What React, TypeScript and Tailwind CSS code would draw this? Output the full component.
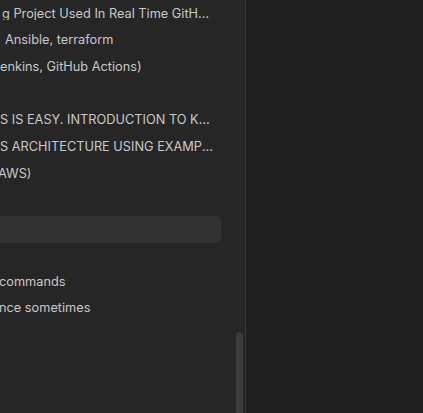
const items: { text: string; pad: string; active?: boolean }[] = [
  { text: 'g Project Used In Real Time GitHub Actions Workflow', pad: 'pl-[2px]' },
  { text: 'Ansible, terraform', pad: 'pl-[5px]' },
  { text: 'enkins, GitHub Actions)', pad: 'pl-0' },
  { text: '', pad: 'pl-0' },
  { text: 'S IS EASY. INTRODUCTION TO KUBERNETES', pad: 'pl-0' },
  { text: 'S ARCHITECTURE USING EXAMPLES', pad: 'pl-0' },
  { text: 'AWS)', pad: '-ml-[2px]' },
  { text: '', pad: 'pl-0' },
  { text: '', pad: 'pl-0', active: true },
  { text: '', pad: 'pl-0' },
  { text: 'commands', pad: '-ml-[1px]' },
  { text: 'nce sometimes', pad: '-ml-[1px]' },
];

export default function App() {
  return (
    <div
      className="flex h-[413px] w-[423px] overflow-hidden bg-[#1f1f1f]"
      style={{ fontFamily: 'Inter, "Noto Sans", sans-serif' }}
    >
      <aside className="relative h-full w-[246px] shrink-0 border-r border-[#363636] bg-[#262626]">
        <ul className="flex flex-col pt-[2.67px]">
          {items.map((item, i) => (
            <li
              key={i}
              className={
                'flex h-[26.67px] w-[221px] items-center' +
                (item.active ? ' h-[25px] mb-[1.67px] rounded-r-[5px] bg-[#323232]' : '')
              }
            >
              <span
                className={
                  'block w-[214px] -translate-y-[2px] truncate whitespace-nowrap text-[12.75px] leading-none text-[#c9c9c9] ' +
                  item.pad
                }
              >
                {item.text}
              </span>
            </li>
          ))}
        </ul>
        <div className="absolute left-[236px] top-[332px] h-[90px] w-[7px] rounded-t-full bg-[#3b3b3b]" />
      </aside>
      <main className="flex-1" />
    </div>
  );
}
